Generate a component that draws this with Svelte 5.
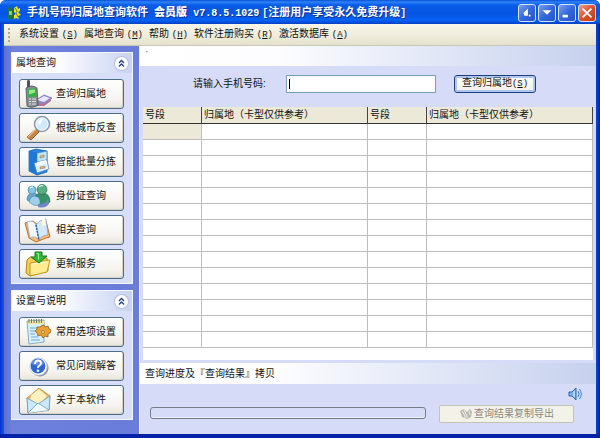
<script>
  const menus = [
    ['系统设置', 'S'],
    ['属地查询', 'M'],
    ['帮助', 'H'],
    ['软件注册购买', 'R'],
    ['激活数据库', 'A']
  ];
  const groups = [
    {
      title: '属地查询',
      items: [
        ['phone', '查询归属地'],
        ['search', '根据城市反查'],
        ['cabinet', '智能批量分拣'],
        ['people', '身份证查询'],
        ['book', '相关查询'],
        ['folder', '更新服务']
      ]
    },
    {
      title: '设置与说明',
      items: [
        ['notes', '常用选项设置'],
        ['help', '常见问题解答'],
        ['mail', '关于本软件']
      ]
    }
  ];
  const headings = ['号段', '归属地（卡型仅供参考）', '号段', '归属地（卡型仅供参考）'];
  const rows = Array.from({ length: 14 }, (_, i) => i);
  let number = $state('');
</script>

{#snippet icon(name)}
  <svg class="icon" viewBox="0 0 28 28" aria-hidden="true">
    {#if name === 'phone'}
      <path d="M12 20l8-5 8 3-7 7-10 1z" fill="#8b86c4" stroke="#6c659e" stroke-width=".6" />
      <path d="M13 20l7-4 6 2-6 4z" fill="#e9e8fb" />
      <path d="M12 23l8 1 7-5v2l-7 5-9-1z" fill="#b86f9c" />
      <rect x="3" y="0" width="3" height="10" rx="1.4" fill="#4d5258" />
      <path d="M2 8q6-4 11 0l1 17q-6 4-11 1z" fill="#878e94" stroke="#464c52" stroke-width=".8" />
      <path d="M4 9l8-.6.6 8.200-8 .6z" fill="#2bb53c" />
      <path d="M5 10l6-.4.2 3-6 2z" fill="#9bea83" />
      <path d="M5 19h2m1 0h4M5 21.500h2m1 0h4M5 24h2m1 0h4" stroke="#dfe3e6" stroke-width="1.200" />
    {:else if name === 'search'}
      <path d="M12 15l3 3-8 8-4-3z" fill="#c98547" stroke="#8a5427" stroke-width=".9" />
      <path d="M12 15l-8 8" stroke="#f0bd84" stroke-width="1.200" />
      <path d="M13 14l3 3" stroke="#5b6b80" stroke-width="2" />
      <circle cx="18" cy="10" r="7.500" fill="#cfeafd" stroke="#8c9ab0" stroke-width="1.600" />
      <circle cx="18" cy="10" r="6" fill="none" stroke="#f7fcff" />
      <path d="M14 9q1-4 5-4l-3 6z" fill="#fff" />
    {:else if name === 'cabinet'}
      <path d="M5 3l7-2 11 2v21l-10 3-8-4z" fill="#2b84dd" stroke="#1457a5" stroke-width=".7" />
      <path d="M5 3l8 2v22l-8-4z" fill="#1f78d2" />
      <path d="M13 5l10-2v9l-10 2z" fill="#bfe3fb" stroke="#287bc7" stroke-width=".6" />
      <path d="M10 15l13-3 2 9-12 4z" fill="#dff2fe" stroke="#287bc7" stroke-width=".6" />
      <path d="M13 14l9-2 1 3-10 3z" fill="#fff" />
      <path d="M16 8l4-1v2l-4 1zM16 19l5-1v2l-5 1z" fill="#eab36a" stroke="#777" stroke-width=".5" />
    {:else if name === 'people'}
      <path d="M3 18q0-7 6-7t6 7q-5 5-12 0z" fill="#6ba6cf" stroke="#34759f" stroke-width=".6" />
      <circle cx="8" cy="8" r="4" fill="#86c3e6" stroke="#39789c" stroke-width=".6" />
      <path d="M10 20q0-9 8-9t8 9q-7 6-16 0z" fill="#389267" stroke="#236442" stroke-width=".6" />
      <circle cx="18" cy="7.500" r="5" fill="#58ae84" stroke="#236442" stroke-width=".6" />
      <path d="M5 20q1-6 6-6 6 1 5 8-4 4-11-2z" fill="#9fd0eb" stroke="#3b83ad" stroke-width=".6" />
      <path d="M14 22q8 1 10-5l1 5q-4 5-11 3z" fill="#7186ca" />
      <path d="M15 5q2-2 4-1M6 6q1-1 3-1" stroke="#dff7ee" stroke-width="1.300" fill="none" />
    {:else if name === 'book'}
      <path d="M1 7l4 15 7 4 10-4 4-1-4-16-8 4-5-4z" fill="#f5bb76" stroke="#c07130" />
      <path d="M3 6q6-3 9 3l3 15q-4-5-9-2z" fill="#f0f8ff" stroke="#8394ad" stroke-width=".6" />
      <path d="M12 9q4-6 10-6l2 16q-6 0-9 5z" fill="#d3e9fb" stroke="#8394ad" stroke-width=".6" />
      <path d="M12 9l3 15" stroke="#2767aa" stroke-width="1.500" stroke-dasharray="2 1" />
      <path d="M18 3v8l2-2 2 1-1-7z" fill="#fff9dc" />
    {:else if name === 'folder'}
      <path d="M3 10l3-3 6 1 2 2 9-2 1 13-18 5-4-3z" fill="#f2cf52" stroke="#b78415" />
      <path d="M6 13l20-3-3 12-17 4z" fill="#ffec91" stroke="#c6951c" />
      <path d="M8 14l15-2" stroke="#fffbd3" />
      <path d="M11 2h7v4h5l-8 7-8-6h4z" fill="#32b83f" stroke="#14771e" />
      <path d="M12.500 3.500h2v6" fill="none" stroke="#a5ef90" />
    {:else if name === 'notes'}
      <path d="M3 3l17-1v22l-15 2z" fill="#d8f0ff" stroke="#709ab9" stroke-width=".8" />
      <path d="M4 3h16v3H4z" fill="#f6e69b" />
      <path d="M5 1v4m2.500-4v4M10 1v4m2.500-4v4M15 1v4m2.500-4v4" stroke="#6d664c" stroke-width=".9" />
      <path d="M6 10h8M6 13h6M6 16h5M7 19h7M7 22h9" stroke="#6ba9dc" />
      <path d="M17 8l3-1 1 2 3-1 1 3 2 1-1 3-2 1v3l-3-1-2 2-2-3-3 1-1-3-2-2 2-2v-2h3z" fill="#e6a237" stroke="#9b6116" stroke-width=".8" />
      <circle cx="19" cy="14" r="1.500" fill="#f9e1a8" stroke="#9b6116" stroke-width=".7" />
    {:else if name === 'help'}
      <circle cx="16" cy="16" r="8.500" fill="#8f95a3" />
      <circle cx="14.500" cy="14.500" r="8.700" fill="#fff" stroke="#b7c0d3" stroke-width=".7" />
      <circle cx="14" cy="14" r="7.400" fill="#2f66cf" />
      <path d="M7.500 12a7 7 0 0113 0q-7 3-13 0z" fill="#648eea" />
      <path d="M11 12q0-3.500 3-3.500t3 2.700q0 1.500-1.700 2.500T14 16" fill="none" stroke="#fff" stroke-width="1.900" />
      <circle cx="14" cy="18.800" r="1.300" fill="#fff" />
    {:else}
      <path d="M3 12L15 2l11 8-1 14-21 3z" fill="#eeb45d" stroke="#bc8840" stroke-width=".8" />
      <path d="M7 9l8-6 8 7-9 10-8-5z" fill="#fff1c0" />
      <path d="M3 12l11 6 12-8-1 14-21 3z" fill="#c9eafc" stroke="#6f9bbb" stroke-width=".8" />
      <path d="M4 27l10-10 11 7" fill="#eefaff" stroke="#6f9bbb" stroke-width=".8" />
    {/if}
  </svg>
{/snippet}

<div class="window">
  <header class="titlebar">
    <svg class="logo" viewBox="0 0 14 14" aria-hidden="true">
      <path d="M1 2l2-2 1 3 2 1v9H1z" fill="#1e7446" />
      <path d="M2 5h3v4H2z" fill="#82ce83" />
      <path d="M7 2l3-2 1 3 2-1v3l-2 1 3 3-3 1 1 3-3-1-2 1V9l2-1-2-2z" fill="#e8e432" />
      <path d="M8 2l2 3-1 2 2 4" fill="none" stroke="#807c13" />
    </svg>
    <h1>手机号码归属地查询软件 <b class="gap">会员版</b> <span class="lat">v7.8.5.1029</span> <span class="lat">[</span>注册用户享受永久免费升级<span class="lat">]</span></h1>
    <div class="controls">
      <button aria-label="收起"><svg viewBox="0 0 18 18"><path d="M10 4v8H6l-1-3zM11 11h2v2h-2z" fill="#fff" /></svg></button>
      <button aria-label="菜单"><svg viewBox="0 0 18 18"><path d="M4 6h10l-5 5z" fill="#fff" /></svg></button>
      <button aria-label="最小化"><svg viewBox="0 0 18 18"><path d="M4 11h6v3H4z" fill="#fff" /></svg></button>
      <button class="close" aria-label="关闭"><svg viewBox="0 0 18 18"><path d="M4 4l10 10M14 4L4 14" stroke="#fff" stroke-width="2" /></svg></button>
    </div>
  </header>

  <div class="client">
    <nav class="menubar">
      <span class="grip"></span>
      {#each menus as [label, key]}
        <button>{label} <span class="lat">(<u>{key}</u>)</span></button>
      {/each}
    </nav>

    <div class="body">
      <aside>
        {#each groups as group}
          <section class="group">
            <header>
              <h2>{group.title}</h2>
              <button class="fold" aria-label="折叠">
                <svg viewBox="0 0 13 13"><path d="M4 6l2.500-2.500L9 6M4 9.500L6.500 7 9 9.500" fill="none" stroke="#1c3c88" stroke-width="1.300" /></svg>
              </button>
            </header>
            <div class="items">
              {#each group.items as [name, label]}
                <button class="item">{@render icon(name)}<span>{label}</span></button>
              {/each}
            </div>
          </section>
        {/each}
      </aside>

      <main>
        <div class="band"><span>·</span></div>
        <form class="query" onsubmit={(e) => e.preventDefault()}>
          <label for="number">请输入手机号码:</label>
          <div class="field">
            <input id="number" type="text" bind:value={number} />
            <span class="caret"></span>
          </div>
          <button class="submit">查询归属地<span class="lat">(<u>S</u>)</span></button>
        </form>
        <div class="grid">
          <table>
            <colgroup><col class="narrow" /><col /><col class="narrow" /><col /></colgroup>
            <thead>
              <tr>{#each headings as h}<th>{h}</th>{/each}</tr>
            </thead>
            <tbody>
              {#each rows as r}
                <tr><td class:current={r === 0}></td><td></td><td></td><td></td></tr>
              {/each}
            </tbody>
          </table>
        </div>
        <div class="band lower"><h2>查询进度及『查询结果』拷贝</h2></div>
        <div class="status">
          <div class="progress" role="progressbar" aria-label="查询进度" aria-valuenow="0"></div>
          <div class="export">
            <svg class="speaker" viewBox="0 0 14 14" aria-hidden="true">
              <path d="M1 5h3l4-4v12L4 9H1z" fill="#7fb4e8" stroke="#2665ae" />
              <path d="M6 4v6" stroke="#e3f3ff" />
              <path d="M10 4q2 3 0 6M11.500 2q3.500 5 0 10" fill="none" stroke="#3a7bc4" />
            </svg>
            <button disabled>
              <svg class="copy" viewBox="0 0 14 12" aria-hidden="true">
                <path d="M1 3l4-2 3 3 3-3 2 3-1 5-4 2-5-2z" fill="#b9b7ad" />
                <path d="M3 3l3 5M5 2l3 6M10 3l1 4M5 9h4" stroke="#f5f4ea" fill="none" />
              </svg>查询结果复制导出
            </button>
          </div>
        </div>
      </main>
    </div>
  </div>
</div>

<style>
  :global(body) {
    margin: 0;
    background: #fff;
  }
  .window,
  .window * {
    box-sizing: border-box;
  }
  .window {
    display: flex;
    flex-direction: column;
    min-height: 100vh;
    padding: 0 4px 4px;
    border-radius: 6px 6px 0 0;
    background: linear-gradient(90deg, #0a2fcf, #0b54e8 3px, #0b3fd0 calc(100% - 3px), #001ea0);
    box-shadow: inset 0 -4px #0522a8;
    font: 10px/14px 'Liberation Sans', 'Noto Sans CJK SC', sans-serif;
    color: #111;
  }
  h1,
  h2 {
    margin: 0;
    font-size: 10px;
    font-weight: 400;
  }
  button,
  input {
    margin: 0;
    padding: 0;
    font: inherit;
    color: inherit;
    white-space: nowrap;
  }
  svg {
    display: block;
    flex: none;
  }
  .lat {
    font-family: 'Liberation Mono', monospace;
    font-size: 9px;
  }
  .titlebar {
    display: flex;
    align-items: center;
    height: 24px;
    margin: 0 -4px;
    padding: 2px 4px 0 7px;
    border-radius: 6px 6px 0 0;
    background: linear-gradient(#0a50d8, #2d83f8 2px, #0a5ce8 5px, #0455e2 14px, #0763f5 20px, #0340c4);
  }
  .logo {
    width: 14px;
    height: 14px;
    margin-right: 6px;
  }
  h1 {
    flex: 1;
    font-size: 11px;
    font-weight: 700;
    color: #fff;
    white-space: nowrap;
    text-shadow: 1px 1px #0a2f92;
  }
  h1 .gap {
    margin: 0 3px;
  }
  h1 .lat {
    font-size: 10px;
  }
  .controls {
    display: flex;
    gap: 2px;
  }
  .controls button {
    width: 18px;
    height: 18px;
    border: 1px solid #d7e3fb;
    border-radius: 3px;
    background: linear-gradient(135deg, #7b9ff0, #3468de 50%, #2353cc);
  }
  .controls svg {
    width: 16px;
    height: 16px;
  }
  .controls .close {
    background: linear-gradient(135deg, #f0a088, #dc5230 50%, #c23c14);
  }
  .client {
    display: flex;
    flex: 1;
    flex-direction: column;
    background: #d6dff7;
  }
  .menubar {
    display: flex;
    align-items: center;
    gap: 6px;
    height: 22px;
    padding: 0 4px;
    border-bottom: 1px solid #c8c8b8;
    background: linear-gradient(#f8f6ea, #efecdc 12px, #e4e1cd);
  }
  .menubar button {
    border: 0;
    background: none;
  }
  .grip {
    width: 2px;
    height: 14px;
    margin-right: 3px;
    background: repeating-linear-gradient(#aaa793 0 2px, transparent 2px 4px);
  }
  .body {
    display: flex;
    flex: 1;
  }
  aside {
    display: flex;
    flex: none;
    flex-direction: column;
    gap: 6px;
    width: 136px;
    padding: 6px 6px 12px 7px;
    border-right: 1px solid #eef2ff;
    background: linear-gradient(90deg, #5b70d4, #6c80dc 8px, #6a7cda);
  }
  .group {
    border: 1px solid #f4f6ff;
    background: #d6dff7;
  }
  .group header {
    display: flex;
    align-items: center;
    justify-content: space-between;
    height: 20px;
    padding: 0 4px;
    background: linear-gradient(90deg, #fff, #fbfcff 40%, #c8d3f2);
  }
  .fold {
    width: 13px;
    height: 13px;
    border: 0;
    border-radius: 50%;
    background: #fff;
    box-shadow: 0 0 1px 1px #b4c0dd;
  }
  .items {
    display: flex;
    flex-direction: column;
    gap: 4px;
    padding: 6px 8px 4px 7px;
  }
  .item {
    display: flex;
    align-items: center;
    gap: 4px;
    height: 30px;
    padding: 0 4px;
    border: 1px solid #4c6c88;
    border-radius: 3px;
    background: linear-gradient(#fff, #f6f5f0 18px, #e9e7dd);
    box-shadow: inset -1px -1px #d6d0c5;
  }
  .icon {
    width: 28px;
    height: 28px;
  }
  main {
    display: flex;
    flex: 1;
    flex-direction: column;
    min-width: 0;
    background: #d6dcf8;
  }
  .band {
    height: 20px;
    padding: 0 5px;
    background: linear-gradient(90deg, #fff, #fdfdff 30%, #c6d1ee);
  }
  .band span {
    display: block;
    line-height: 12px;
    color: #666;
  }
  .query {
    display: flex;
    align-items: center;
    height: 41px;
    padding: 0 60px 6px 53px;
  }
  .query label {
    width: 93px;
    white-space: nowrap;
  }
  .field {
    position: relative;
    flex: 1;
    margin-right: 18px;
  }
  .field input {
    display: block;
    width: 100%;
    height: 18px;
    padding: 0 4px;
    border: 1px solid #7f9db9;
    background: #fff;
  }
  .caret {
    position: absolute;
    top: 4px;
    left: 3px;
    width: 1px;
    height: 10px;
    background: #000;
  }
  .submit {
    width: 82px;
    height: 18px;
    border: 1px solid #1c3f75;
    border-radius: 3px;
    background: linear-gradient(#fff, #f0efe8);
    box-shadow: inset 0 0 0 2px #b0c6f2;
    line-height: 14px;
  }
  .grid {
    flex: 1;
    margin: 0 3px;
    padding-bottom: 12px;
    background: #fff;
  }
  table {
    width: 100%;
    border-collapse: separate;
    border-spacing: 0;
    table-layout: fixed;
  }
  .narrow {
    width: 59px;
  }
  th,
  td {
    padding: 0 2px;
    border-right: 1px solid #bdbdbd;
    border-bottom: 1px solid #bdbdbd;
  }
  td {
    height: 16px;
  }
  th {
    height: 17px;
    border-right-color: #444;
    border-bottom-color: #333;
    background: #ece9d8;
    font-weight: 400;
    line-height: 14px;
    text-align: left;
    white-space: nowrap;
    overflow: hidden;
  }
  .current {
    background: #ece9d8;
  }
  .lower {
    height: 21px;
    margin-top: 3px;
  }
  .lower h2 {
    line-height: 22px;
  }
  .status {
    display: flex;
    gap: 13px;
    align-items: flex-end;
    height: 50px;
    padding: 0 22px 11px 10px;
  }
  .progress {
    flex: 1;
    height: 12px;
    margin-bottom: 4px;
    border: 1px solid #777b88;
    border-radius: 3px;
    background: #d6dcf8;
    box-shadow: inset 0 -1px #f0f2fc;
  }
  .export {
    display: flex;
    flex-direction: column;
    gap: 4px;
    width: 135px;
  }
  .speaker {
    width: 14px;
    height: 14px;
    margin-right: -8px;
    align-self: flex-end;
  }
  .export button {
    display: flex;
    align-items: center;
    justify-content: center;
    gap: 1px;
    height: 18px;
    border: 1px solid #c5c3b5;
    border-radius: 2px;
    background: #f3f2e8;
    color: #8a887e;
  }
  .copy {
    width: 14px;
    height: 12px;
  }
</style>
